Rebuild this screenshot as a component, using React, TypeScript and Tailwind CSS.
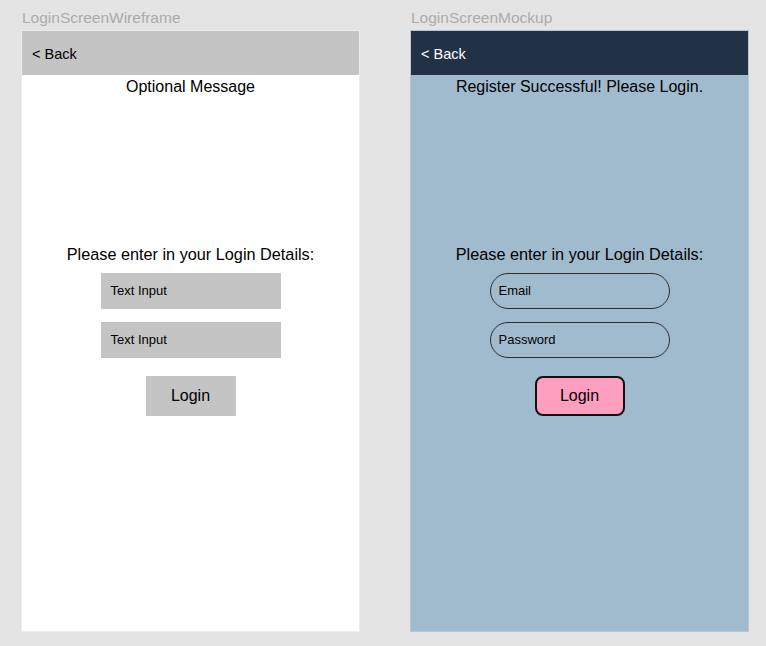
import React from "react";

const font = { fontFamily: '"Liberation Sans", Arial, sans-serif' };

function Frame({
  label,
  mock,
  message,
}: {
  label: string;
  mock: boolean;
  message: string;
}) {
  return (
    <div className="flex flex-col w-[337px]">
      <div className="h-[31px] pt-[9px] text-[15.5px] leading-[18px] text-[#ababab]">
        {label}
      </div>
      <div
        className={
          "flex flex-col h-[600px] ring-1 " +
          (mock ? "bg-[#a0bbce] ring-[#b7c6d0]" : "bg-white ring-[#ececec]")
        }
      >
        <div
          className={
            "h-[44px] flex items-center pl-[10px] pt-[3px] text-[14.5px] " +
            (mock ? "bg-[#223246] text-white" : "bg-[#c4c4c4] text-black")
          }
        >
          &lt; Back
        </div>
        <div className="mt-[2px] text-center text-[16px] leading-[20px] text-black">
          {message}
        </div>
        <div className="mt-[147px] text-center text-[16.25px] leading-[20px] text-black">
          Please enter in your Login Details:
        </div>
        <div className="flex flex-col items-center mt-[9px] gap-[13px]">
          {mock ? (
            <>
              <div className="w-[180px] h-[36px] rounded-full border-[1.5px] border-[#2e2e2e] flex items-center pl-[8px] text-[13px] text-black">
                Email
              </div>
              <div className="w-[180px] h-[36px] rounded-full border-[1.5px] border-[#2e2e2e] flex items-center pl-[8px] text-[13px] text-black">
                Password
              </div>
            </>
          ) : (
            <>
              <div className="w-[180px] h-[36px] bg-[#c4c4c4] flex items-center pl-[10px] text-[13px] text-black">
                Text Input
              </div>
              <div className="w-[180px] h-[36px] bg-[#c4c4c4] flex items-center pl-[10px] text-[13px] text-black">
                Text Input
              </div>
            </>
          )}
        </div>
        <div className="flex justify-center mt-[18px]">
          {mock ? (
            <div className="w-[90px] h-[40px] rounded-[8px] border-2 border-[#111] bg-[#ff9fbf] flex items-center justify-center text-[16px] text-black">
              Login
            </div>
          ) : (
            <div className="w-[90px] h-[40px] bg-[#c4c4c4] flex items-center justify-center text-[16px] text-black">
              Login
            </div>
          )}
        </div>
      </div>
    </div>
  );
}

export default function App() {
  return (
    <div
      className="w-[766px] h-[646px] bg-[#e4e4e4] flex pl-[22px] gap-[52px]"
      style={font}
    >
      <Frame label="LoginScreenWireframe" mock={false} message="Optional Message" />
      <Frame
        label="LoginScreenMockup"
        mock={true}
        message="Register Successful! Please Login."
      />
    </div>
  );
}
